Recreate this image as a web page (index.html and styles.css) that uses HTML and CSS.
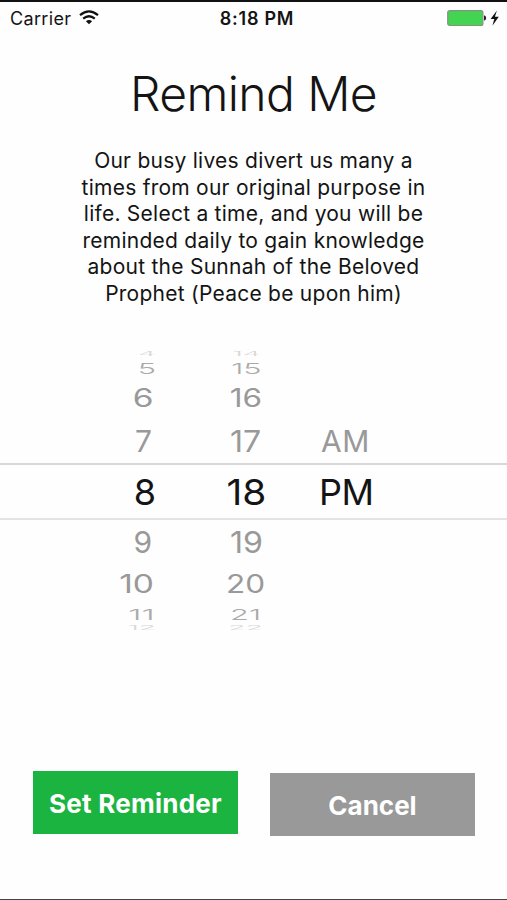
FILE: index.html
```html
<!DOCTYPE html>
<html lang="en">
<head>
<meta charset="utf-8">
<title>Remind Me</title>
<link rel="stylesheet" href="styles.css">
</head>
<body>
<main class="screen">
  <header class="status">
    <div class="carrier">
      <span class="carrier-name">Carrier</span>
      <svg class="wifi" width="20" height="15" viewBox="0 0 20 15" fill="none" stroke="#111" stroke-width="2.2">
        <path d="M1 5.2Q10 -2.4 19 5.2"/>
        <path d="M4.2 8.7Q10 3.8 15.8 8.7"/>
        <path d="M10 14.2L6.9 11.3Q10 8.8 13.1 11.3Z" fill="#111" stroke="none"/>
      </svg>
    </div>
    <time class="clock">8:18 PM</time>
    <svg class="battery" width="54" height="18" viewBox="0 0 54 18">
      <rect x="0.7" y="1.7" width="35.2" height="14.8" rx="2" fill="#43d551" stroke="#839485" stroke-width="1.2"/>
      <path d="M37 6.3Q39.2 7 39.2 9Q39.2 11 37 11.7Z" fill="#222"/>
      <path d="M49.9 1.6L43.6 10H47.3L45.4 16.8L51.8 7.8H47.9Z" fill="#111"/>
    </svg>
  </header>

  <h1 class="title">Remind Me</h1>
  <p class="intro">
    <span class="line">Our busy lives divert us many a</span>
    <span class="line">times from our original purpose in</span>
    <span class="line">life. Select a time, and you will be</span>
    <span class="line">reminded daily to gain knowledge</span>
    <span class="line">about the Sunnah of the Beloved</span>
    <span class="line">Prophet (Peace be upon him)</span>
  </p>

  <section class="picker">
    <div class="row far"><span class="hour">4</span><span class="minute">14</span></div>
    <div class="row third up"><span class="hour">5</span><span class="minute">15</span></div>
    <div class="row second up"><span class="hour">6</span><span class="minute">16</span></div>
    <div class="row first up"><span class="hour">7</span><span class="minute">17</span><span class="period">AM</span></div>
    <div class="row selected"><span class="hour">8</span><span class="minute">18</span><span class="period">PM</span></div>
    <div class="row first down"><span class="hour">9</span><span class="minute">19</span></div>
    <div class="row second down"><span class="hour">10</span><span class="minute">20</span></div>
    <div class="row third down"><span class="hour">11</span><span class="minute">21</span></div>
    <div class="row far"><span class="hour">12</span><span class="minute">22</span></div>
  </section>

  <footer class="actions">
    <button class="btn set">Set Reminder</button>
    <button class="btn cancel">Cancel</button>
  </footer>
</main>
</body>
</html>
```
FILE: styles.css
```css
* { box-sizing: border-box; }
body {
  margin: 0;
  background: #fefefe;
  color: #141414;
  font-family: Inter, "Liberation Sans", sans-serif;
}
.screen {
  display: flex;
  flex-direction: column;
  width: 507px;
  height: 900px;
  border-top: 2px solid #111;
  border-bottom: 1px solid #444;
}
.status {
  display: grid;
  grid-template-columns: 1fr auto 1fr;
  align-items: center;
  height: 32px;
  padding: 0 6px 0 10px;
}
.carrier { display: flex; align-items: center; gap: 8px; }
.carrier-name { font-size: 18px; letter-spacing: 0.35px; }
.wifi { margin-top: -2px; }
.clock { margin-left: 3px; font-size: 18px; font-weight: 600; letter-spacing: 0.75px; }
.battery { justify-self: end; margin-top: -1px; }
.title {
  margin: 30px 0 0;
  height: 60px;
  line-height: 60px;
  text-align: center;
  font-size: 48px;
  font-weight: 300;
  letter-spacing: -0.6px;
}
.intro {
  margin: 24px 0 0;
  height: 159px;
  text-align: center;
  font-size: 21px;
  letter-spacing: 0.25px;
}
.line { display: block; height: 26.5px; line-height: 26.5px; white-space: nowrap; }
.picker { margin-top: 42px; height: 284px; }
.row {
  display: grid;
  grid-template-columns: 156px 140px 1fr;
  column-gap: 20px;
  align-items: center;
  line-height: 1;
  font-size: 30px;
  color: #999;
}
.row span { display: block; }
.hour { justify-self: end; transform-origin: right center; }
.minute { justify-self: center; }
.period { justify-self: start; margin-left: -17px; letter-spacing: -0.6px; }
.selected {
  height: 57px;
  border-top: 2px solid #d8d8d8;
  border-bottom: 2px solid #e4e4e4;
  color: #141414;
  font-size: 36px;
}
.selected .minute { transform: scaleX(1.08); }
.first { height: 44px; }
.first .hour { margin-right: 4px; }
.first .minute { transform: scaleX(1.07); }
.first .period { margin-left: -15px; letter-spacing: 0.5px; }
.second { height: 41px; font-size: 25px; }
.second .hour { margin-right: 2px; transform: scaleX(1.34); }
.second .minute { transform: scaleX(1.26); }
.third { height: 21px; font-size: 15px; font-weight: 300; color: #aaa; }
.third .hour, .third .minute { transform: scaleX(2.05); }
.third.up { height: 20px; }
.third.down { height: 18px; }
.third.down .hour { margin-right: 1px; transform: scaleX(2.25); }
.far { height: 9px; font-size: 6px; font-weight: 300; color: #d8d8d8; }
.far .hour, .far .minute { transform: scaleX(4.7); }
.actions {
  display: flex;
  gap: 32px;
  margin: 138px 0 0 33px;
}
.btn {
  width: 205px;
  height: 63px;
  padding: 2px 0 0;
  border: 0;
  color: #fff;
  font: 700 26px Inter, "Liberation Sans", sans-serif;
  letter-spacing: 0.25px;
}
.set { background: #1cb440; }
.cancel { margin-top: 2px; background: #999; letter-spacing: 0; }
```
